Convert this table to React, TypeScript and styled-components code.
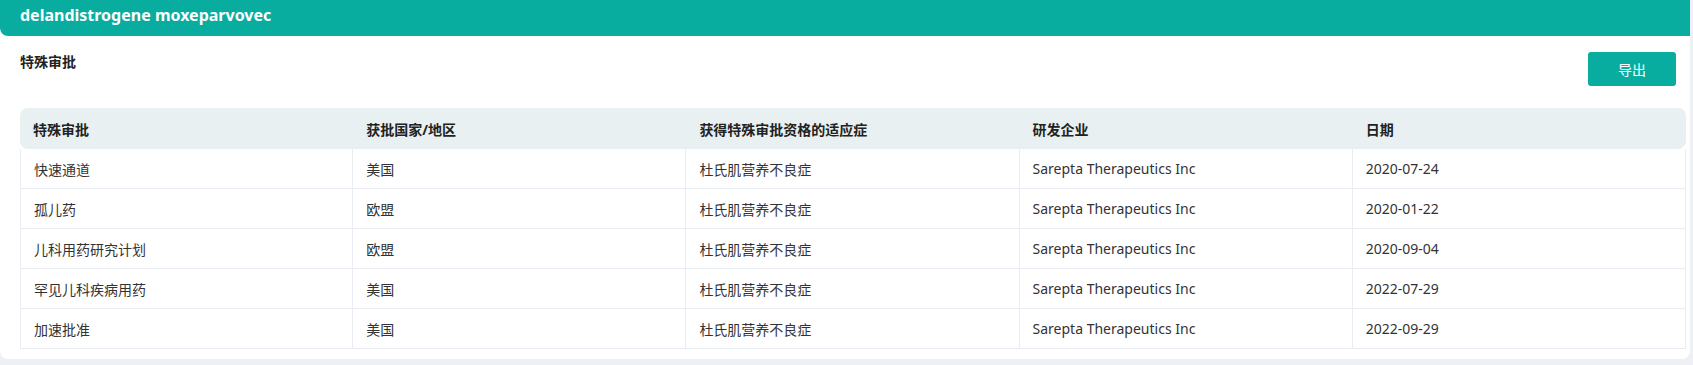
import React from 'react';
import styled, { createGlobalStyle } from 'styled-components';

const GlobalStyle = createGlobalStyle`
    html, body {
        margin: 0;
        padding: 0;
        background: #edf1f6;
        font-family: "Noto Sans", "Noto Sans CJK SC", sans-serif;
        color: #333;
    }
`;

const Card = styled.div`
    width: calc(100% - 3px);
    background: #fff;
    border-radius: 0 0 8px 8px;
    padding-bottom: 10px;
    margin-bottom: 5px;
`;

const TitleBar = styled.div`
    height: 36px;
    box-sizing: border-box;
    background: #08ada0;
    border-radius: 0 0 0 8px;
    padding: 4px 20px 0;
    color: #fff;
    font-size: 16px;
    font-weight: 700;
    line-height: 22px;
`;

const Body = styled.div`
    padding: 0 4px 0 20px;
`;

const Toolbar = styled.div`
    display: flex;
    justify-content: space-between;
    align-items: flex-start;
    padding: 16px 10px 22px 0;
`;

const SectionTitle = styled.div`
    font-size: 14px;
    font-weight: 700;
    line-height: 20px;
    color: #222;
`;

const ExportButton = styled.button`
    width: 88px;
    height: 34px;
    border: none;
    border-radius: 3px;
    background: #08ada0;
    color: #fff;
    font-family: inherit;
    font-size: 14px;
    cursor: pointer;
`;

const Table = styled.table`
    width: 100%;
    table-layout: fixed;
    border-collapse: separate;
    border-spacing: 0;
    font-size: 14px;
`;

const HeadCell = styled.th`
    height: 41px;
    padding: 0 13px;
    background: #e8f0f1;
    text-align: left;
    font-weight: 700;
    color: #222;

    &:first-child {
        border-radius: 8px 0 0 8px;
    }
    &:last-child {
        border-radius: 0 8px 8px 0;
    }
`;

const Cell = styled.td`
    height: 39px;
    padding: 0 13px;
    border-bottom: 1px solid #e9ecf3;
    border-right: 1px solid #e9ecf3;
    color: #333;

    &:first-child {
        border-left: 1px solid #e9ecf3;
    }
`;

const columns = ['特殊审批', '获批国家/地区', '获得特殊审批资格的适应症', '研发企业', '日期'];

const rows = [
    ['快速通道', '美国', '杜氏肌营养不良症', 'Sarepta Therapeutics Inc', '2020-07-24'],
    ['孤儿药', '欧盟', '杜氏肌营养不良症', 'Sarepta Therapeutics Inc', '2020-01-22'],
    ['儿科用药研究计划', '欧盟', '杜氏肌营养不良症', 'Sarepta Therapeutics Inc', '2020-09-04'],
    ['罕见儿科疾病用药', '美国', '杜氏肌营养不良症', 'Sarepta Therapeutics Inc', '2022-07-29'],
    ['加速批准', '美国', '杜氏肌营养不良症', 'Sarepta Therapeutics Inc', '2022-09-29'],
];

export default function App() {
    return (
        <>
            <GlobalStyle />
            <Card>
                <TitleBar>delandistrogene moxeparvovec</TitleBar>
                <Body>
                    <Toolbar>
                        <SectionTitle>特殊审批</SectionTitle>
                        <ExportButton>导出</ExportButton>
                    </Toolbar>
                    <Table>
                        <thead>
                            <tr>
                                {columns.map((c) => (
                                    <HeadCell key={c}>{c}</HeadCell>
                                ))}
                            </tr>
                        </thead>
                        <tbody>
                            {rows.map((r, i) => (
                                <tr key={i}>
                                    {r.map((v, j) => (
                                        <Cell key={j}>{v}</Cell>
                                    ))}
                                </tr>
                            ))}
                        </tbody>
                    </Table>
                </Body>
            </Card>
        </>
    );
}
